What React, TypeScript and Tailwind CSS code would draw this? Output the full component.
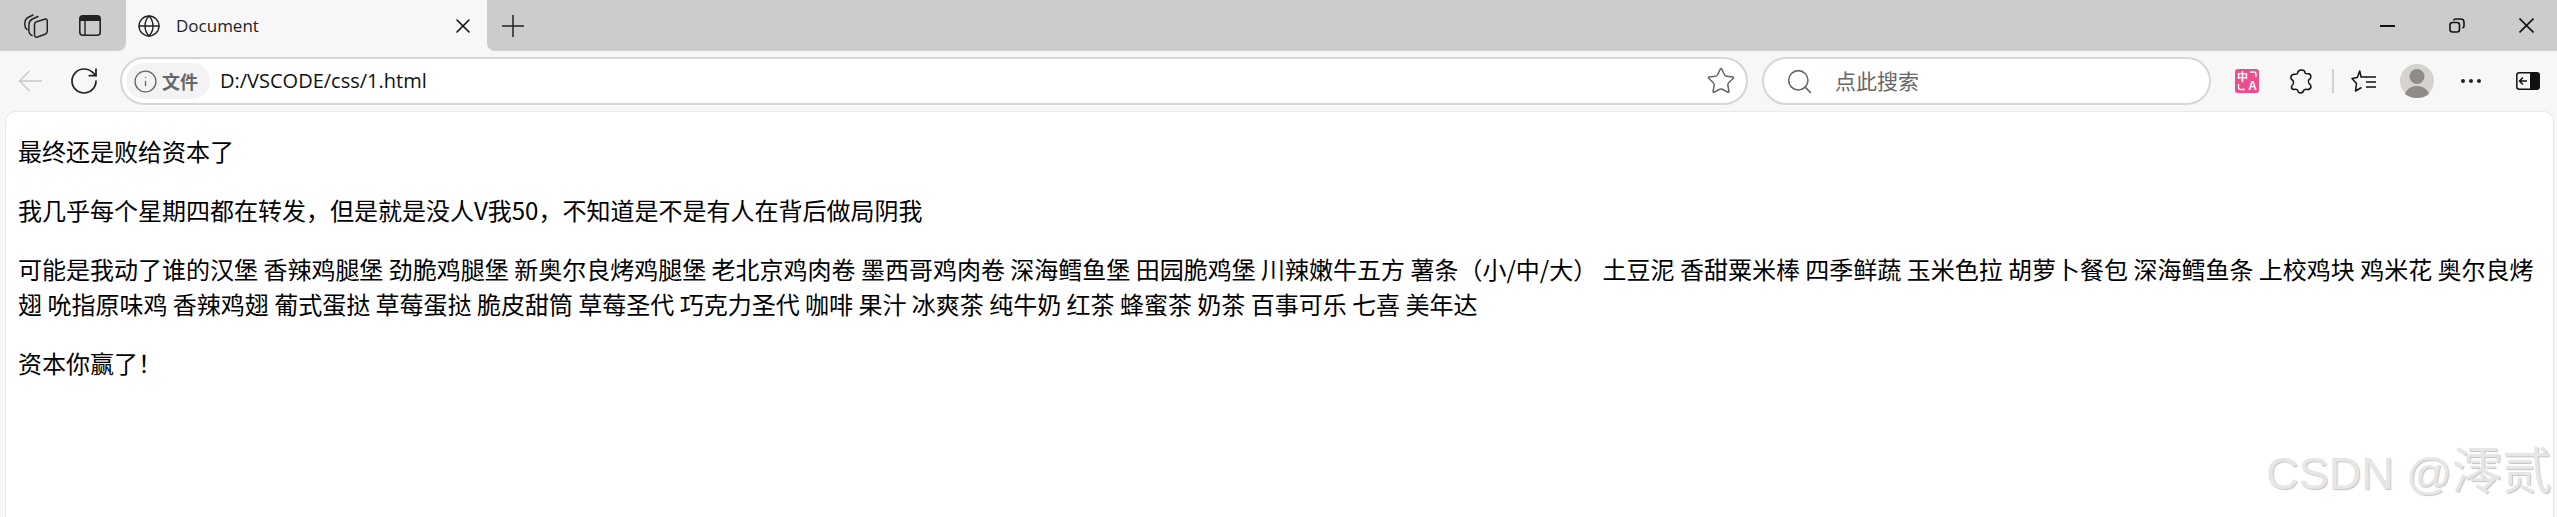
import { Globe, Info, RotateCw, Search, Star, X } from "lucide-react";

const CJK = "font-['Noto_Sans_CJK_SC','Noto_Sans',sans-serif]";
const UI = "font-['Open_Sans','Noto_Sans',sans-serif]";

function TabsIcon() {
  return (
    <svg width="24" height="24" viewBox="0 0 24 24" fill="none" stroke="#222" strokeWidth="1.5" strokeLinecap="round" strokeLinejoin="round">
      <path d="M3 15.5 Q0.5 13.5 0.8 9.5 Q1 5 4 3.5 L9 1" />
      <path d="M8 21.5 Q5 20.5 4.8 16 L5 10 Q5.2 6.5 8.5 5 L14 2.5" />
      <path d="M10.5 10.5 Q10.5 8.5 12.5 7.8 L20.5 5.2 Q23.3 4.5 23.3 7.5 V17 Q23.3 19.5 21 20.3 L13.5 23 Q10.5 23.7 10.5 20.5 Z" />
    </svg>
  );
}

function SidebarIcon() {
  return (
    <svg width="22" height="21" viewBox="0 0 22 21" fill="none">
      <rect x="0.8" y="0.8" width="20.4" height="19.4" rx="3" stroke="#222" strokeWidth="1.6" />
      <path d="M1 6 V4 Q1 1 4 1 H18 Q21 1 21 4 V6 Z" fill="#222" />
      <path d="M6 6 V20" stroke="#222" strokeWidth="1.4" />
    </svg>
  );
}

function PlusIcon() {
  return (
    <svg width="22" height="22" viewBox="0 0 22 22" stroke="#222" strokeWidth="1.5">
      <path d="M0 11 H22 M11 0 V22" />
    </svg>
  );
}

function RestoreIcon() {
  return (
    <svg width="16" height="15" viewBox="0 0 16 15" fill="none" stroke="#111" strokeWidth="1.6">
      <rect x="1" y="4.5" width="9.5" height="9.5" rx="2.5" />
      <path d="M4.5 2.5 Q5 1 7 1 H11.5 Q15 1 15 4.5 V8 Q15 9.5 13.5 10" />
    </svg>
  );
}

function CloseIcon() {
  return (
    <svg width="15" height="15" viewBox="0 0 15 15" stroke="#111" strokeWidth="1.6">
      <path d="M0.5 0.5 L14.5 14.5 M14.5 0.5 L0.5 14.5" />
    </svg>
  );
}

function BackIcon() {
  return (
    <svg width="24" height="22" viewBox="0 0 24 22" fill="none" stroke="#c9c9c9" strokeWidth="1.5">
      <path d="M24 11 H1.5 M11.5 1 L1.5 11 L11.5 21" />
    </svg>
  );
}

function TranslateIcon() {
  return (
    <div className="relative h-[24px] w-[24px] rounded-[3px] bg-[#ee4d8b] text-white">
      <span className="absolute left-[2px] top-[1px] text-[11px] leading-[12px] font-bold font-['Noto_Sans_CJK_SC',sans-serif]">中</span>
      <span className="absolute right-[2px] bottom-[1px] text-[12px] leading-[12px] font-bold font-['Liberation_Sans',sans-serif]">A</span>
      <svg className="absolute inset-0" width="24" height="24" viewBox="0 0 24 24" fill="none" stroke="#fff" strokeWidth="1.3">
        <path d="M15 3 H19 Q21 3 21 5 V8" />
        <path d="M3.5 15 V18 Q3.5 20.5 6 20.5 H10" />
      </svg>
    </div>
  );
}

function ExtensionIcon() {
  return (
    <svg width="22" height="25" viewBox="0 0 22 25" fill="none" stroke="#111" strokeWidth="1.5" strokeLinejoin="round">
      <path d="M7.5 4.5 Q8 1 11.5 1 Q15 1 15 4 Q16 5 18.5 4.8 Q21 5 20.8 8 Q20.8 10 19 10.5 Q17.5 12.5 19 14.5 Q21 15.5 21 18 Q20.5 20.5 17.5 20.5 Q15.5 20 14 21 Q13 24 10.5 24 Q8 24 7.5 21 Q6 20 4 20.5 Q1.5 20.5 1.5 18 Q1.5 16.5 3 15.5 Q4 13 3 11.5 Q0.8 10.5 0.8 8.5 Q1 5.5 4 5.2 Q6.5 5.5 7.5 4.5 Z" />
    </svg>
  );
}

function FavoritesIcon() {
  return (
    <svg width="25" height="22" viewBox="0 0 25 22" fill="none" stroke="#111" strokeWidth="1.5" strokeLinejoin="round">
      <path d="M15.5 7 L10 7 L8.8 1 L6.3 7.5 L1 8.5 L5.5 13.5 L4.5 21 L10.5 17.5" />
      <path d="M15 7 H25 M15 12 H25 M15 17 H25" />
    </svg>
  );
}

function Avatar() {
  return (
    <svg width="34" height="34" viewBox="0 0 34 34">
      <circle cx="17" cy="17" r="17" fill="#d4d3cf" />
      <circle cx="17" cy="12.5" r="7.5" fill="#8f8b87" />
      <path d="M5 30 Q8 22 17 22 Q26 22 29 30 Q24 34 17 34 Q10 34 5 30 Z" fill="#8f8b87" />
    </svg>
  );
}

function DotsIcon() {
  return (
    <div className="flex w-[20px] justify-between">
      <div className="h-[4px] w-[4px] rounded-full bg-[#222]" />
      <div className="h-[4px] w-[4px] rounded-full bg-[#222]" />
      <div className="h-[4px] w-[4px] rounded-full bg-[#222]" />
    </div>
  );
}

function SplitIcon() {
  return (
    <svg width="24" height="18" viewBox="0 0 24 18" fill="none">
      <rect x="0.8" y="0.8" width="22.4" height="16.4" rx="2.5" stroke="#111" strokeWidth="1.5" />
      <path d="M14 1 H21 Q23.5 1 23.5 3.5 V14.5 Q23.5 17 21 17 H14 Z" fill="#111" />
      <path d="M11 9 H3.5 M7 5.5 L3.5 9 L7 12.5" stroke="#111" strokeWidth="1.5" />
    </svg>
  );
}

export default function App() {
  return (
    <div className="relative flex h-[517px] w-[2557px] flex-col overflow-hidden bg-[#f7f7f7]">
      {/* tab strip */}
      <div className="flex h-[51px]">
        <div className="flex w-[126px] items-center rounded-br-[8px] bg-[#cccccc] pl-[24px]">
          <TabsIcon />
          <div className="ml-[31px]">
            <SidebarIcon />
          </div>
        </div>
        <div className="flex w-[361px] items-center rounded-t-[12px] bg-[#f7f7f7] pl-[11px] pr-[12px]">
          <Globe size={24} strokeWidth={1.4} color="#222" />
          <span className={`ml-[15px] flex-1 text-[17px] text-[#222] ${UI}`}>Document</span>
          <X size={24} strokeWidth={1.6} color="#111" />
        </div>
        <div className="flex flex-1 items-center rounded-bl-[8px] bg-[#cccccc] pl-[15px] pr-[23px]">
          <PlusIcon />
          <div className="ml-auto h-[2px] w-[15px] bg-[#111]" />
          <div className="ml-[54px]">
            <RestoreIcon />
          </div>
          <div className="ml-[54px]">
            <CloseIcon />
          </div>
        </div>
      </div>
      {/* toolbar */}
      <div className="flex h-[60px] items-center pl-[18px]">
        <BackIcon />
        <RotateCw size={32} strokeWidth={1.3} color="#222" className="ml-[26px]" />
        <div className="ml-[20px] flex h-[48px] w-[1628px] items-center rounded-full border-[2px] border-[#d6d6d6] bg-white pl-[4px] pr-[10px]">
          <div className={`flex h-[36px] w-[84px] items-center gap-[4px] rounded-full bg-[#f3f3f3] pl-[7px] text-[18px] font-bold text-[#666] ${CJK}`}>
            <Info size={25} strokeWidth={1.3} color="#666" />
            <span>文件</span>
          </div>
          <span className={`ml-[10px] flex-1 text-[20px] text-[#111] ${UI}`}>D:/VSCODE/css/1.html</span>
          <Star size={30} strokeWidth={1.2} color="#666" />
        </div>
        <div className="ml-[14px] flex h-[48px] w-[449px] items-center rounded-full border-[2px] border-[#d6d6d6] bg-white pl-[21px]">
          <Search size={29} strokeWidth={1.3} color="#666" />
          <span className={`ml-[21px] text-[21px] text-[#666] ${CJK}`}>点此搜索</span>
        </div>
        <div className="ml-[24px] flex items-center">
          <TranslateIcon />
          <div className="ml-[31px]">
            <ExtensionIcon />
          </div>
          <div className="ml-[20px] h-[24px] w-[2px] bg-[#cfcfcf]" />
          <div className="ml-[17px]">
            <FavoritesIcon />
          </div>
          <div className="ml-[24px]">
            <Avatar />
          </div>
          <div className="ml-[27px]">
            <DotsIcon />
          </div>
          <div className="ml-[35px]">
            <SplitIcon />
          </div>
        </div>
      </div>
      {/* page */}
      <div className={`ml-[5px] mr-[3px] flex-1 rounded-t-[10px] border-x border-t border-[#e8e8e8] bg-white px-[12px] pt-[21px] text-[24px] leading-[35px] text-black ${CJK}`}>
        <p>最终还是败给资本了</p>
        <p className="mt-[24px]">我几乎每个星期四都在转发，但是就是没人V我50，不知道是不是有人在背后做局阴我</p>
        <p className="mt-[24px]">
          可能是我动了谁的汉堡 香辣鸡腿堡 劲脆鸡腿堡 新奥尔良烤鸡腿堡 老北京鸡肉卷 墨西哥鸡肉卷 深海鳕鱼堡 田园脆鸡堡 川辣嫩牛五方 薯条（小/中/大） 土豆泥 香甜粟米棒 四季鲜蔬 玉米色拉 胡萝卜餐包 深海鳕鱼条 上校鸡块 鸡米花 奥尔良烤翅 吮指原味鸡 香辣鸡翅 葡式蛋挞 草莓蛋挞 脆皮甜筒 草莓圣代 巧克力圣代 咖啡 果汁 冰爽茶 纯牛奶 红茶 蜂蜜茶 奶茶 百事可乐 七喜 美年达
        </p>
        <p className="mt-[24px]">资本你赢了！</p>
      </div>
      {/* csdn watermark */}
      <span className="absolute right-[5px] bottom-[20px] text-[45px] leading-none text-[#e6e6e6] [text-shadow:1px_1px_1px_#c4c4c4] font-['Liberation_Sans','Noto_Sans_CJK_SC',sans-serif]">
        CSDN @<span className="text-[50px]">澪贰</span>
      </span>
    </div>
  );
}
